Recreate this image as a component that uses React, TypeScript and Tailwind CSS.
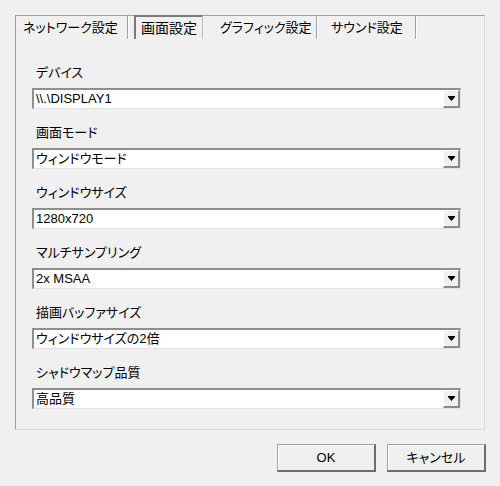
import React from "react";

const fields = [
  { label: "デバイス", value: "\\\\.\\DISPLAY1" },
  { label: "画面モード", value: "ウィンドウモード" },
  { label: "ウィンドウサイズ", value: "1280x720" },
  { label: "マルチサンプリング", value: "2x MSAA" },
  { label: "描画バッファサイズ", value: "ウィンドウサイズの2倍" },
  { label: "シャドウマップ品質", value: "高品質" },
];

function Combo({ value }: { value: string }) {
  return (
    <div className="flex h-[21px] w-[429px] border-t-2 border-l-2 border-t-[#8f8f8f] border-l-[#8f8f8f] border-r border-b border-r-[#e3e3e3] border-b-[#e3e3e3] bg-white">
      <div className="flex-1 pl-[2px] text-[13px] leading-[18px] text-black">{value}</div>
      <div className="flex w-[17px] items-center justify-center border-t border-l border-white border-r-2 border-b-2 border-r-[#8a8a8a] border-b-[#8a8a8a] bg-[#f0f0f0]">
        <svg width="7" height="5" viewBox="0 0 7 5">
          <rect x="0" y="0" width="7" height="1" fill="#000" />
          <polygon points="0,1 7,1 3.5,5" fill="#000" />
        </svg>
      </div>
    </div>
  );
}

export default function App() {
  return (
    <div className="h-[486px] w-[500px] bg-[#f0f0f0] pl-[15px] pt-[15px] font-['Liberation_Sans','Noto_Sans_CJK_JP',sans-serif] text-black [font-feature-settings:'palt']">
      <div className="h-[415px] w-[470px] border-t border-l border-t-[#a0a0a0] border-l-[#a0a0a0] border-r border-b border-r-[#dadada] border-b-[#dadada]">
        {/* tabs */}
        <div className="flex h-[23px] whitespace-nowrap text-[13px] leading-[23px]">
          <div className="w-[112px] border-r border-r-[#a0a0a0] pl-[7px] shadow-[1px_0_0_#fff]">ネットワーク設定</div>
          <div className="w-[6px]" />
          <div className="-mt-px w-[69px] border-t-2 border-l-2 border-t-[#7a7a7a] border-l-[#7a7a7a] border-r border-r-[#bcbcbc] pl-[5px] text-[14px] leading-[22px]">画面設定</div>
          <div className="w-[114px] border-r border-r-[#a0a0a0] pl-[17px] shadow-[1px_0_0_#fff]">グラフィック設定</div>
          <div className="w-[99px] border-r border-r-[#a0a0a0] pl-[14px] shadow-[1px_0_0_#fff]">サウンド設定</div>
        </div>

        <div className="pl-[16px] pt-[26px]">
          {fields.map((f) => (
            <div key={f.label} className="mb-[16px]">
              <div className="pl-[4px] text-[13px] leading-[16px]">{f.label}</div>
              <div className="mt-[7px]">
                <Combo value={f.value} />
              </div>
            </div>
          ))}
        </div>
      </div>

      <div className="mt-[14px] flex w-[471px] justify-end gap-[11px]">
        {["OK", "キャンセル"].map((t) => (
          <button
            key={t}
            className="h-[28px] w-[99px] border border-[#a0a0a0] border-r-2 border-b-2 border-r-[#6e6e6e] border-b-[#6e6e6e] bg-[#f0f0f0] text-[13px] shadow-[inset_1px_1px_0_#fff]"
          >
            {t}
          </button>
        ))}
      </div>
    </div>
  );
}
